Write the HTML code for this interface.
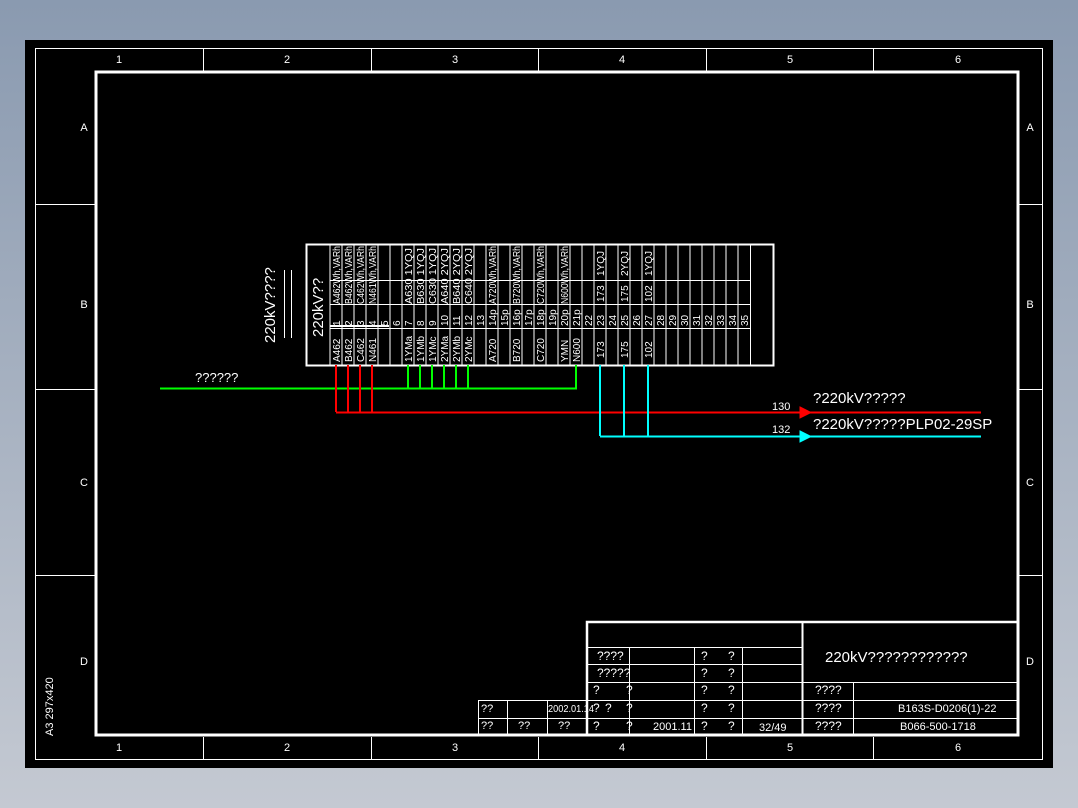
<!DOCTYPE html>
<html><head><meta charset="utf-8"><style>
html,body{margin:0;padding:0;width:1078px;height:808px;overflow:hidden;background:linear-gradient(#8a9ab0,#c4c9d2);}
svg{display:block}
text{font-family:"Liberation Sans Narrow","Liberation Sans",sans-serif;fill:#fff}
</style></head><body>
<svg width="1078" height="808" viewBox="0 0 1078 808" xmlns="http://www.w3.org/2000/svg">
<rect x="25" y="40" width="1028" height="728" fill="#000"/>
<rect x="35.5" y="48.5" width="1007" height="711" fill="none" stroke="#fff" stroke-width="1"/>
<rect x="96" y="72" width="922" height="663" fill="none" stroke="#fff" stroke-width="3"/>
<g stroke="#fff" stroke-width="1">
<path d="M203.5 48V71M371.5 48V71M538.5 48V71M706.5 48V71M873.5 48V71M203.5 737V760M371.5 737V760M538.5 737V760M706.5 737V760M873.5 737V760"/>
<path d="M36 204.5H95M36 389.5H95M36 575.5H95M1019 204.5H1042M1019 389.5H1042M1019 575.5H1042"/>
</g>
<g font-size="11" text-anchor="middle">
<text x="119" y="63">1</text><text x="287" y="63">2</text><text x="455" y="63">3</text><text x="622" y="63">4</text><text x="790" y="63">5</text><text x="958" y="63">6</text>
<text x="119" y="751">1</text><text x="287" y="751">2</text><text x="455" y="751">3</text><text x="622" y="751">4</text><text x="790" y="751">5</text><text x="958" y="751">6</text>
<text x="84" y="131">A</text><text x="84" y="308">B</text><text x="84" y="486">C</text><text x="84" y="665">D</text>
<text x="1030" y="131">A</text><text x="1030" y="308">B</text><text x="1030" y="486">C</text><text x="1030" y="665">D</text>
</g>
<text transform="translate(53,736) rotate(-90)" font-size="11">A3  297x420</text>

<!-- terminal block -->
<g stroke="#fff" fill="none">
<rect x="306.5" y="244.5" width="467" height="121" stroke-width="2"/>
<path stroke-width="1" d="M330 244V365M342 244V365M354 244V365M366 244V365M378 244V365M390 244V365M402 244V365M414 244V365M426 244V365M438 244V365M450 244V365M462 244V365M474 244V365M486 244V365M498 244V365M510 244V365M522 244V365M534 244V365M546 244V365M558 244V365M570 244V365M582 244V365M594 244V365M606 244V365M618 244V365M630 244V365M642 244V365M654 244V365M666 244V365M678 244V365M690 244V365M702 244V365M714 244V365M726 244V365M738 244V365M750.5 244V365"/>
<path stroke-width="1" d="M330 280.5H750M330 304.5H750M330 328.5H750"/>
<path stroke-width="2" d="M330 326H389"/>
<path stroke-width="1" d="M284.5 270V338M291.5 270V338"/>
</g>
<text transform="translate(323,337) rotate(-90)" font-size="15">220kV??</text>
<text transform="translate(275,343) rotate(-90)" font-size="15">220kV????</text>
<g font-size="10">
<text transform="translate(340,304) rotate(-90)" textLength="58" lengthAdjust="spacingAndGlyphs">A462Wh,VARh</text>
<text transform="translate(352,304) rotate(-90)" textLength="58" lengthAdjust="spacingAndGlyphs">B462Wh,VARh</text>
<text transform="translate(364,304) rotate(-90)" textLength="58" lengthAdjust="spacingAndGlyphs">C462Wh,VARh</text>
<text transform="translate(376,304) rotate(-90)" textLength="58" lengthAdjust="spacingAndGlyphs">N461Wh,VARh</text>
<text transform="translate(412,304) rotate(-90)" textLength="56" lengthAdjust="spacingAndGlyphs">A630 1YQJ</text>
<text transform="translate(424,304) rotate(-90)" textLength="56" lengthAdjust="spacingAndGlyphs">B630 1YQJ</text>
<text transform="translate(436,304) rotate(-90)" textLength="56" lengthAdjust="spacingAndGlyphs">C630 1YQJ</text>
<text transform="translate(448,304) rotate(-90)" textLength="56" lengthAdjust="spacingAndGlyphs">A640 2YQJ</text>
<text transform="translate(460,304) rotate(-90)" textLength="56" lengthAdjust="spacingAndGlyphs">B640 2YQJ</text>
<text transform="translate(472,304) rotate(-90)" textLength="56" lengthAdjust="spacingAndGlyphs">C640 2YQJ</text>
<text transform="translate(496,304) rotate(-90)" textLength="58" lengthAdjust="spacingAndGlyphs">A720Wh,VARh</text>
<text transform="translate(520,304) rotate(-90)" textLength="58" lengthAdjust="spacingAndGlyphs">B720Wh,VARh</text>
<text transform="translate(544,304) rotate(-90)" textLength="58" lengthAdjust="spacingAndGlyphs">C720Wh,VARh</text>
<text transform="translate(568,304) rotate(-90)" textLength="58" lengthAdjust="spacingAndGlyphs">N600Wh,VARh</text>
<text transform="translate(604,302) rotate(-90)">173</text><text transform="translate(604,276) rotate(-90)">1YQJ</text>
<text transform="translate(628,302) rotate(-90)">175</text><text transform="translate(628,276) rotate(-90)">2YQJ</text>
<text transform="translate(652,302) rotate(-90)">102</text><text transform="translate(652,276) rotate(-90)">1YQJ</text>
</g>
<g font-size="10">
<text transform="translate(340,326) rotate(-90)">1</text><text transform="translate(352,326) rotate(-90)">2</text><text transform="translate(364,326) rotate(-90)">3</text><text transform="translate(376,326) rotate(-90)">4</text><text transform="translate(388,326) rotate(-90)">5</text><text transform="translate(400,326) rotate(-90)">6</text><text transform="translate(412,326) rotate(-90)">7</text><text transform="translate(424,326) rotate(-90)">8</text><text transform="translate(436,326) rotate(-90)">9</text><text transform="translate(448,326) rotate(-90)">10</text><text transform="translate(460,326) rotate(-90)">11</text><text transform="translate(472,326) rotate(-90)">12</text><text transform="translate(484,326) rotate(-90)">13</text><text transform="translate(496,326) rotate(-90)">14p</text><text transform="translate(508,326) rotate(-90)">15p</text><text transform="translate(520,326) rotate(-90)">16p</text><text transform="translate(532,326) rotate(-90)">17p</text><text transform="translate(544,326) rotate(-90)">18p</text><text transform="translate(556,326) rotate(-90)">19p</text><text transform="translate(568,326) rotate(-90)">20p</text><text transform="translate(580,326) rotate(-90)">21p</text><text transform="translate(592,326) rotate(-90)">22</text><text transform="translate(604,326) rotate(-90)">23</text><text transform="translate(616,326) rotate(-90)">24</text><text transform="translate(628,326) rotate(-90)">25</text><text transform="translate(640,326) rotate(-90)">26</text><text transform="translate(652,326) rotate(-90)">27</text><text transform="translate(664,326) rotate(-90)">28</text><text transform="translate(676,326) rotate(-90)">29</text><text transform="translate(688,326) rotate(-90)">30</text><text transform="translate(700,326) rotate(-90)">31</text><text transform="translate(712,326) rotate(-90)">32</text><text transform="translate(724,326) rotate(-90)">33</text><text transform="translate(736,326) rotate(-90)">34</text><text transform="translate(748,326) rotate(-90)">35</text>
</g>
<g font-size="10">
<text transform="translate(340,362) rotate(-90)">A462</text><text transform="translate(352,362) rotate(-90)">B462</text><text transform="translate(364,362) rotate(-90)">C462</text><text transform="translate(376,362) rotate(-90)">N461</text>
<text transform="translate(412,362) rotate(-90)">1YMa</text><text transform="translate(424,362) rotate(-90)">1YMb</text><text transform="translate(436,362) rotate(-90)">1YMc</text><text transform="translate(448,362) rotate(-90)">2YMa</text><text transform="translate(460,362) rotate(-90)">2YMb</text><text transform="translate(472,362) rotate(-90)">2YMc</text>
<text transform="translate(496,362) rotate(-90)">A720</text><text transform="translate(520,362) rotate(-90)">B720</text><text transform="translate(544,362) rotate(-90)">C720</text><text transform="translate(568,362) rotate(-90)">YMN</text><text transform="translate(580,362) rotate(-90)">N600</text>
<text transform="translate(604,358) rotate(-90)">173</text><text transform="translate(628,358) rotate(-90)">175</text><text transform="translate(652,358) rotate(-90)">102</text>
</g>

<!-- wires -->
<g fill="none" stroke-width="2">
<path stroke="#00ff00" d="M160 388.5H577M408 365V388M420 365V388M432 365V388M444 365V388M456 365V388M468 365V388M576 365V388"/>
<path stroke="#ff0000" d="M336 412.5H981M336 365V412M348 365V412M360 365V412M372 365V412"/>
<path stroke="#00ffff" d="M600 436.5H981M600 365V436M624 365V436M648 365V436"/>
</g>
<path d="M800 407L811 412.5L800 418Z" fill="#ff0000" stroke="#ff0000"/>
<path d="M800 431L811 436.5L800 442Z" fill="#00ffff" stroke="#00ffff"/>
<text x="195" y="382" font-size="13">??????</text>
<text x="772" y="410" font-size="11">130</text>
<text x="772" y="433" font-size="11">132</text>
<text x="813" y="403" font-size="15">?220kV?????</text>
<text x="813" y="429" font-size="15">?220kV?????PLP02-29SP</text>

<!-- title block -->
<g stroke="#fff" fill="none" stroke-width="1">
<rect x="587" y="622" width="431" height="113" stroke-width="2.5"/>
<path stroke-width="2" d="M802.5 622V735"/>
<path d="M587 647.5H802M587 664.5H802M587 682.5H1018M587 700.5H1018M478 700.5H587M478 718.5H1018M478.5 700V735M507.5 700V735M547.5 700V735M629.5 647V735M694.5 647V735M742.5 647V735M853.5 682V735"/>
</g>
<g font-size="12">
<text x="597" y="660">????</text><text x="597" y="677">?????</text>
<text x="593" y="694">?</text><text x="626" y="694">?</text>
<text x="593" y="712">?</text><text x="605" y="712">?</text><text x="626" y="712">?</text>
<text x="593" y="730">?</text><text x="626" y="730">?</text>
<text x="653" y="730" font-size="11">2001.11</text>
<text x="701" y="660">?</text><text x="728" y="660">?</text>
<text x="701" y="677">?</text><text x="728" y="677">?</text>
<text x="701" y="694">?</text><text x="728" y="694">?</text>
<text x="701" y="712">?</text><text x="728" y="712">?</text>
<text x="701" y="730">?</text><text x="728" y="730">?</text>
<text x="759" y="731" font-size="11">32/49</text>
<text x="825" y="662" font-size="15">220kV????????????</text>
<text x="815" y="694">????</text><text x="815" y="712">????</text><text x="815" y="730">????</text>
<text x="898" y="712" font-size="11">B163S-D0206(1)-22</text>
<text x="900" y="730" font-size="11">B066-500-1718</text>
<text x="481" y="712" font-size="11">??</text>
<text x="548" y="712" font-size="10" textLength="46" lengthAdjust="spacingAndGlyphs">2002.01.14</text>
<text x="481" y="729" font-size="11">??</text><text x="518" y="729" font-size="11">??</text><text x="558" y="729" font-size="11">??</text>
</g>
</svg>
</body></html>
